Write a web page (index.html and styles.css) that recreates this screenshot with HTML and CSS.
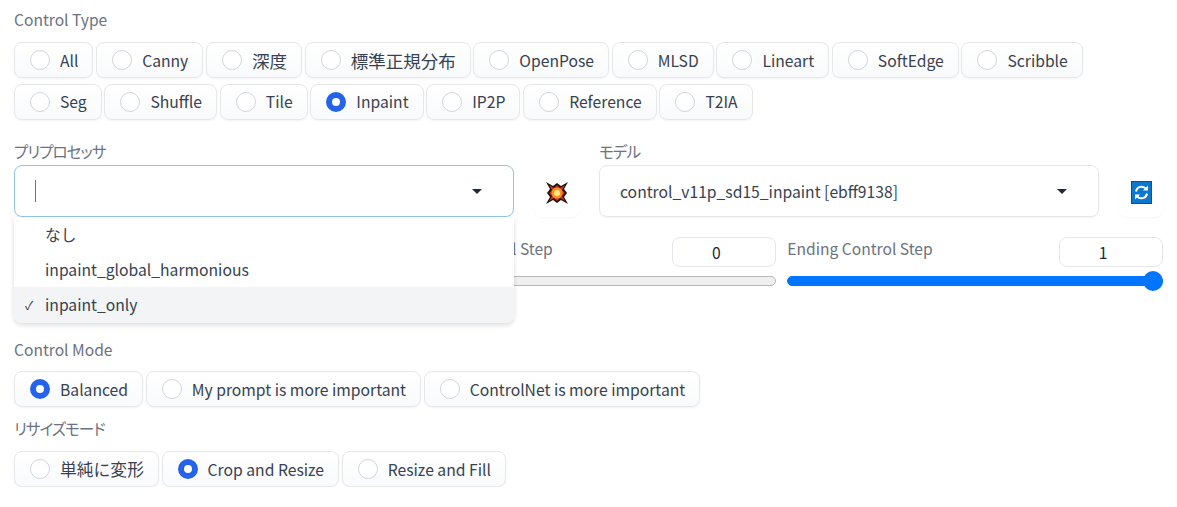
FILE: index.html
```html
<!DOCTYPE html>
<html lang="ja">
<head>
    <meta charset="UTF-8">
    <title>ControlNet</title>
    <link rel="stylesheet" href="styles.css">
</head>
<body>
<div class="panel">
    <div class="field-label first">Control Type</div>
    <div class="radio-group">
        <label class="pill"><span class="radio"></span>All</label>
        <label class="pill"><span class="radio"></span>Canny</label>
        <label class="pill"><span class="radio"></span><span class="cjk">深度</span></label>
        <label class="pill"><span class="radio"></span><span class="cjk">標準正規分布</span></label>
        <label class="pill"><span class="radio"></span>OpenPose</label>
        <label class="pill"><span class="radio"></span>MLSD</label>
        <label class="pill"><span class="radio"></span>Lineart</label>
        <label class="pill"><span class="radio"></span>SoftEdge</label>
        <label class="pill"><span class="radio"></span>Scribble</label>
    </div>
    <div class="radio-group next">
        <label class="pill"><span class="radio"></span>Seg</label>
        <label class="pill"><span class="radio"></span>Shuffle</label>
        <label class="pill"><span class="radio"></span>Tile</label>
        <label class="pill"><span class="radio checked"></span>Inpaint</label>
        <label class="pill"><span class="radio"></span>IP2P</label>
        <label class="pill"><span class="radio"></span>Reference</label>
        <label class="pill"><span class="radio"></span>T2IA</label>
    </div>

    <div class="select-row">
        <div class="select-col">
            <div class="field-label kana">プリプロセッサ</div>
            <div class="select-box focused">
                <span class="caret"></span>
                <span class="arrow"></span>
            </div>
            <ul class="dropdown">
                <li>なし</li>
                <li>inpaint_global_harmonious</li>
                <li class="selected"><span class="tick">✓</span>inpaint_only</li>
            </ul>
        </div>
        <div class="tool-btn boom">
            <svg width="22" height="22" viewBox="0 0 22 22">
                <path fill="#17100e" d="M0 0 7 4 11 1 15 4 22 0 18 7 21 11 18 15 22 22 15 18 11 21 7 18 0 22 4 15 1 11 4 7Z"/>
                <path fill="#d4301a" d="M3 3 8 6 11 3 14 6 19 3 16 8 19 11 16 14 19 19 14 16 11 19 8 16 3 19 6 14 3 11 6 8Z"/>
                <circle fill="#f59322" cx="11" cy="11" r="5.500"/>
                <circle fill="#ffe680" cx="11" cy="11" r="3"/>
            </svg>
        </div>
        <div class="select-col model">
            <div class="field-label kana">モデル</div>
            <div class="select-box">
                <span class="select-value">control_v11p_sd15_inpaint [ebff9138]</span>
                <span class="arrow"></span>
            </div>
        </div>
        <div class="tool-btn refresh">
            <svg width="21" height="23" viewBox="0 0 21 23">
                <rect width="21" height="23" fill="#1c4a78"/>
                <rect x="1" y="1" width="19" height="21" fill="#0b78d0"/>
                <path fill="none" stroke="#fff" stroke-width="2" d="M5 10.500a5.600 5.600 0 0 1 10-2.600M16 12.500a5.600 5.600 0 0 1-10 2.600"/>
                <path fill="#fff" d="M17 4.500v5h-5zM4 18.500v-5h5z"/>
            </svg>
        </div>
    </div>

    <div class="slider-row">
        <div class="slider-col"></div>
        <div class="slider-col">
            <div class="slider-head">
                <span class="field-label">Starting Control Step</span>
                <span class="num-input">0</span>
            </div>
            <div class="track"></div>
        </div>
        <div class="slider-col">
            <div class="slider-head">
                <span class="field-label">Ending Control Step</span>
                <span class="num-input">1</span>
            </div>
            <div class="track full"><span class="thumb"></span></div>
        </div>
    </div>

    <div class="field-label mode">Control Mode</div>
    <div class="radio-group">
        <label class="pill"><span class="radio checked"></span>Balanced</label>
        <label class="pill"><span class="radio"></span>My prompt is more important</label>
        <label class="pill"><span class="radio"></span>ControlNet is more important</label>
    </div>

    <div class="field-label kana resize">リサイズモード</div>
    <div class="radio-group">
        <label class="pill"><span class="radio"></span><span class="cjk narrow">単純に変形</span></label>
        <label class="pill"><span class="radio checked"></span>Crop and Resize</label>
        <label class="pill"><span class="radio"></span>Resize and Fill</label>
    </div>
</div>
</body>
</html>
```

FILE: styles.css
```css
body {
    margin: 0;
    background-color: #fff;
    color: #374151;
    font-family: "Noto Sans CJK JP", "Noto Sans", sans-serif;
    font-size: 15.700px;
    overflow: hidden;
}

.panel {
    width: 1149px;
    padding: 8px 14px 0;
}

.field-label {
    color: #6b7280;
    font-size: 15.600px;
    line-height: 22px;
}

.field-label.kana {
    font-feature-settings: "palt";
    letter-spacing: -1px;
}

.field-label.first {
    margin-bottom: 12px;
}

.field-label.mode {
    margin-top: 52px;
    margin-bottom: 11px;
}

.field-label.resize {
    margin-top: 10px;
    margin-bottom: 12px;
}

.radio-group {
    display: flex;
    gap: 2.700px;
}

.radio-group.next {
    margin-top: 5.500px;
}

.pill {
    display: flex;
    align-items: center;
    height: 34px;
    padding: 0 14px 0 15px;
    border: 1px solid #e5e7eb;
    border-radius: 8px;
    background: linear-gradient(#fff, #f9fafb);
    box-shadow: 0 1px 2px rgba(0, 0, 0, 0.05);
    white-space: nowrap;
}

.cjk {
    font-size: 17.500px;
}

.cjk.narrow {
    font-size: 16.800px;
}

.radio {
    box-sizing: border-box;
    width: 20px;
    height: 20px;
    margin-right: 10px;
    border: 1px solid #d1d5db;
    border-radius: 50%;
    background-color: #fff;
}

.radio.checked {
    border: 6px solid #2563eb;
}

.select-row {
    display: flex;
    align-items: flex-end;
    gap: 20px;
    margin-top: 20.500px;
}

.select-col {
    position: relative;
    width: 501px;
}

.select-col.model {
    margin-left: -1px;
}

.select-box {
    display: flex;
    align-items: center;
    justify-content: space-between;
    box-sizing: border-box;
    height: 52px;
    margin-top: 3px;
    padding: 0 31px 0 20px;
    border: 1px solid #e5e7eb;
    border-radius: 8px;
    box-shadow: 0 1px 2px rgba(0, 0, 0, 0.05);
}

.select-box.focused {
    border-color: #93c5e8;
}

.caret {
    width: 1px;
    height: 22px;
    background-color: #6b7280;
}

.arrow {
    width: 0;
    height: 0;
    border-left: 5px solid transparent;
    border-right: 5px solid transparent;
    border-top: 5px solid #1f2937;
}

.dropdown {
    position: absolute;
    top: 77px;
    left: 0;
    right: 0;
    z-index: 10;
    margin: 0;
    padding: 0;
    list-style: none;
    background-color: #fff;
    border-radius: 0 0 8px 8px;
    box-shadow: 0 2px 5px rgba(0, 0, 0, 0.14);
    overflow: hidden;
}

.dropdown li {
    position: relative;
    height: 35.200px;
    padding-left: 31px;
    line-height: 35px;
}

.dropdown li.selected {
    background-color: #f3f4f6;
}

.tick {
    position: absolute;
    left: 11px;
    width: 12px;
    font-size: 12px;
}

.tool-btn {
    box-sizing: border-box;
    display: flex;
    align-items: center;
    justify-content: center;
    width: 46px;
    height: 42px;
    padding-bottom: 7px;
    border-radius: 8px;
    box-shadow: 0 1px 2px rgba(0, 0, 0, 0.04);
}

.tool-btn.refresh {
    width: 44px;
}

.tool-btn svg {
    display: block;
}

.slider-row {
    display: flex;
    gap: 11px;
    margin-top: 20px;
}

.slider-col {
    flex: 1;
}

.slider-head {
    display: flex;
    align-items: flex-start;
    justify-content: space-between;
    height: 39px;
}

.num-input {
    box-sizing: border-box;
    width: 104px;
    height: 30px;
    padding-right: 16px;
    border: 1px solid #e5e7eb;
    border-radius: 8px;
    color: #1f2937;
    line-height: 30px;
    text-align: center;
}

.track {
    position: relative;
    box-sizing: border-box;
    height: 10px;
    border: 1px solid #b8b8b8;
    border-radius: 5px;
    background-color: #efefef;
}

.track.full {
    border-color: #0075ff;
    background-color: #0075ff;
}

.thumb {
    position: absolute;
    top: -6px;
    right: -1px;
    width: 20px;
    height: 20px;
    border-radius: 50%;
    background-color: #0075ff;
}
```
